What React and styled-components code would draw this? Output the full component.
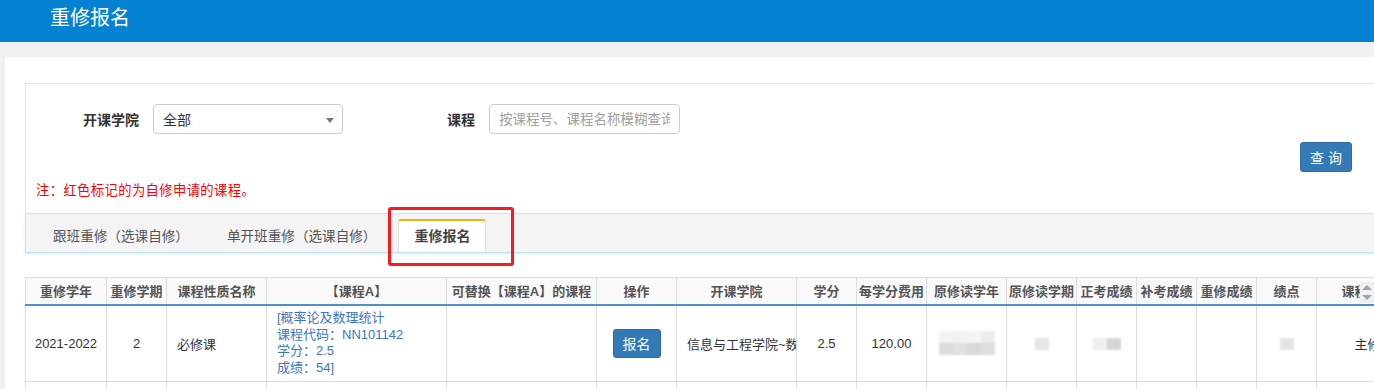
import React from "react";
import styled, { createGlobalStyle } from "styled-components";

const GlobalStyle = createGlobalStyle`
  html, body {
    margin: 0;
    padding: 0;
    background: #f0f0f0;
    overflow: hidden;
    font-family: "Liberation Sans", "Noto Sans CJK SC", sans-serif;
  }
  * {
    box-sizing: border-box;
  }
`;

const columns = [
  { title: "重修学年", width: 81 },
  { title: "重修学期", width: 60 },
  { title: "课程性质名称", width: 100 },
  { title: "【课程A】", width: 180 },
  { title: "可替换【课程A】的课程", width: 150 },
  { title: "操作", width: 80 },
  { title: "开课学院", width: 120 },
  { title: "学分", width: 60 },
  { title: "每学分费用", width: 70 },
  { title: "原修读学年", width: 80 },
  { title: "原修读学期", width: 70 },
  { title: "正考成绩", width: 60 },
  { title: "补考成绩", width: 60 },
  { title: "重修成绩", width: 60 },
  { title: "绩点", width: 60 },
  { title: "课程类别", width: 102 },
];

const tabs = [
  { label: "跟班重修（选课自修）" },
  { label: "单开班重修（选课自修）" },
  { label: "重修报名", active: true },
];

const App = () => {
  return (
    <>
      <GlobalStyle />
      <TopBar>
        <Title>重修报名</Title>
      </TopBar>
      <Page>
        <Panel>
          <FilterBox>
            <FilterRow>
              <Field>
                <Label>开课学院</Label>
                <SelectBox>
                  <span>全部</span>
                  <Caret />
                </SelectBox>
              </Field>
              <Field>
                <Label>课程</Label>
                <TextInput placeholder="按课程号、课程名称模糊查询" />
              </Field>
            </FilterRow>
            <ButtonRow>
              <PrimaryButton>查 询</PrimaryButton>
            </ButtonRow>
            <Note>注：红色标记的为自修申请的课程。</Note>
          </FilterBox>

          <TabWrap>
            <TabBar>
              {tabs.map((t) => (
                <Tab key={t.label} $active={t.active}>
                  {t.label}
                </Tab>
              ))}
            </TabBar>
            <Highlight />
          </TabWrap>

          <TableArea>
            <Table>
              <colgroup>
                {columns.map((c) => (
                  <col key={c.title} style={{ width: c.width }} />
                ))}
              </colgroup>
              <thead>
                <tr>
                  {columns.map((c) => (
                    <Th key={c.title}>{c.title}</Th>
                  ))}
                </tr>
              </thead>
              <tbody>
                <tr>
                  <Td $center>2021-2022</Td>
                  <Td $center>2</Td>
                  <Td>必修课</Td>
                  <Td>
                    <CourseText>
                      [概率论及数理统计
                      <br />
                      课程代码：NN101142
                      <br />
                      学分：2.5
                      <br />
                      成绩：54]
                    </CourseText>
                  </Td>
                  <Td />
                  <Td $center>
                    <SmallButton>报名</SmallButton>
                  </Td>
                  <Td>信息与工程学院~数学系</Td>
                  <Td $center>2.5</Td>
                  <Td $center>120.00</Td>
                  <Td $center>
                    <Mosaic $cols={4}>
                      <Px $c="#f3f3f3" />
                      <Px $c="#f1f1f1" />
                      <Px $c="#f4f4f4" />
                      <Px $c="#ececec" />
                      <Px $c="#dcdcdc" />
                      <Px $c="#e0e0e0" />
                      <Px $c="#d8d8d8" />
                      <Px $c="#dedede" />
                    </Mosaic>
                  </Td>
                  <Td $center>
                    <Mosaic $cols={1}>
                      <Px $c="#e6e6e6" />
                    </Mosaic>
                  </Td>
                  <Td $center>
                    <Mosaic $cols={2}>
                      <Px $c="#eeeeee" />
                      <Px $c="#d6d6d6" />
                    </Mosaic>
                  </Td>
                  <Td />
                  <Td />
                  <Td $center>
                    <Mosaic $cols={1}>
                      <Px $c="#e4e4e8" />
                    </Mosaic>
                  </Td>
                  <Td $center>主修</Td>
                </tr>
                <tr>
                  {columns.map((c) => (
                    <Td key={c.title} />
                  ))}
                </tr>
              </tbody>
            </Table>
            <ScrollButtons>
              <Arrow $up />
              <Arrow />
            </ScrollButtons>
          </TableArea>
        </Panel>
      </Page>
    </>
  );
};

export default App;

const TopBar = styled.div`
  height: 42px;
  background: #0583d2;
  padding-left: 50px;
`;

const Title = styled.div`
  color: #ffffff;
  font-size: 20px;
  line-height: 36px;
`;

const Page = styled.div`
  padding: 15px 0 0 5px;
  width: 1425px;
`;

const Panel = styled.div`
  background: #ffffff;
  padding: 26px 0 40px 20px;
`;

const FilterBox = styled.div`
  border: 1px solid #e3e3e3;
  border-bottom: none;
  padding: 20px 72px 15px 10px;
`;

const FilterRow = styled.div`
  display: flex;
  align-items: center;
  height: 30px;
`;

const Field = styled.div`
  display: flex;
  align-items: center;
  margin-right: 29px;
`;

const Label = styled.label`
  width: 103px;
  margin-right: 14px;
  text-align: right;
  font-size: 14px;
  font-weight: bold;
  color: #333333;
`;

const SelectBox = styled.div`
  position: relative;
  width: 190px;
  height: 30px;
  border: 1px solid #cccccc;
  border-radius: 4px;
  padding: 0 9px;
  display: flex;
  align-items: center;
  font-size: 14px;
  color: #333333;
`;

const Caret = styled.span`
  position: absolute;
  right: 8px;
  top: 13px;
  width: 0;
  height: 0;
  border-left: 4px solid transparent;
  border-right: 4px solid transparent;
  border-top: 5px solid #777777;
`;

const TextInput = styled.input`
  width: 191px;
  height: 30px;
  border: 1px solid #cccccc;
  border-radius: 4px;
  padding: 0 9px;
  font-size: 13.5px;
  font-family: inherit;
  color: #333333;
  outline: none;
  &::placeholder {
    color: #a0a0a0;
  }
`;

const ButtonRow = styled.div`
  display: flex;
  justify-content: flex-end;
  margin-top: 8px;
`;

const PrimaryButton = styled.button`
  width: 52px;
  height: 30px;
  padding: 0;
  border: 1px solid #2e6da4;
  border-radius: 3px;
  background: #337ab7;
  color: #ffffff;
  font-size: 14px;
  font-family: inherit;
`;

const Note = styled.div`
  margin-top: 11px;
  font-size: 13.3px;
  letter-spacing: 0.4px;
  line-height: 15px;
  color: #ff0000;
`;

const TabWrap = styled.div`
  position: relative;
`;

const TabBar = styled.div`
  display: flex;
  align-items: flex-end;
  height: 40px;
  padding-left: 11px;
  background: #f4f4f4;
  border: 1px solid #c6e4ef;
  box-shadow: 0 1px 2px rgba(120, 190, 220, 0.35);
`;

const Tab = styled.div`
  height: 33px;
  padding: 0 15px;
  margin-right: 6px;
  line-height: 31px;
  font-size: ${(p) => (p.$active ? "14px" : "13.6px")};
  font-weight: ${(p) => (p.$active ? "bold" : "normal")};
  color: ${(p) => (p.$active ? "#444444" : "#555555")};
  background: ${(p) => (p.$active ? "#ffffff" : "transparent")};
  border-top: 2px solid ${(p) => (p.$active ? "#f2b21b" : "transparent")};
  border-left: 1px solid ${(p) => (p.$active ? "#dddddd" : "transparent")};
  border-right: 1px solid ${(p) => (p.$active ? "#dddddd" : "transparent")};
  border-radius: 3px 3px 0 0;
  white-space: nowrap;
`;

const Highlight = styled.div`
  position: absolute;
  left: 363px;
  top: -6px;
  width: 126px;
  height: 59px;
  border: 3px solid #f41c1c;
  border-radius: 3px;
`;

const TableArea = styled.div`
  position: relative;
  margin-top: 24px;
  overflow: hidden;
`;

const Table = styled.table`
  border-collapse: collapse;
  table-layout: fixed;
  width: 1393px;
`;

const Th = styled.th`
  height: 27px;
  padding: 0 2px;
  background: #f9f9f9;
  border: 1px solid #dddddd;
  border-bottom: 2px solid #4f8fcf;
  font-size: 13px;
  font-weight: bold;
  color: #555555;
  white-space: nowrap;
  overflow: hidden;
  text-align: center;
`;

const Td = styled.td`
  height: 77px;
  padding: 0 ${(p) => (p.$center ? "2px" : "10px")};
  border: 1px solid #dddddd;
  font-size: 13px;
  color: #333333;
  vertical-align: middle;
  text-align: ${(p) => (p.$center ? "center" : "left")};
  white-space: nowrap;
  overflow: hidden;
`;

const CourseText = styled.div`
  color: #3a77bd;
  line-height: 16.5px;
  white-space: nowrap;
`;

const SmallButton = styled.button`
  width: 48px;
  height: 29px;
  padding: 0;
  border: 1px solid #2e6da4;
  border-radius: 3px;
  background: #337ab7;
  color: #ffffff;
  font-size: 14px;
  font-family: inherit;
`;

const Mosaic = styled.div`
  display: inline-grid;
  grid-template-columns: repeat(${(p) => p.$cols}, 14px);
  grid-auto-rows: 12px;
  filter: blur(1px);
  vertical-align: middle;
`;

const Px = styled.span`
  background: ${(p) => p.$c};
`;

const ScrollButtons = styled.div`
  position: absolute;
  left: 1335px;
  top: 5px;
  width: 14px;
  height: 21px;
  background: #f0f0f0;
  display: flex;
  flex-direction: column;
  align-items: center;
  justify-content: space-around;
`;

const Arrow = styled.span`
  width: 0;
  height: 0;
  border-left: 5px solid transparent;
  border-right: 5px solid transparent;
  ${(p) =>
    p.$up
      ? "border-bottom: 5px solid #a3a3a3;"
      : "border-top: 5px solid #a3a3a3;"}
`;
